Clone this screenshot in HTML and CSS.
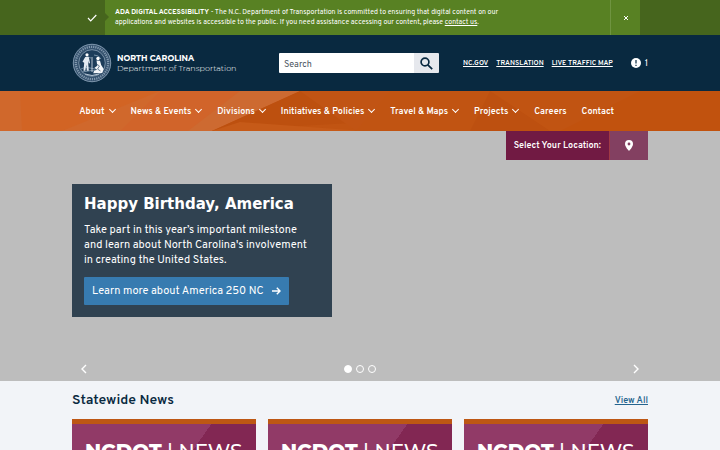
FILE: index.html
```html
<!DOCTYPE html>
<html lang="en">

<head>
  <meta charset="utf-8">
  <meta name="viewport" content="width=device-width, initial-scale=1">
  <title>NCDOT</title>
  <link rel="stylesheet" href="styles.css">
</head>

<body>

  <div class="alert">
    <div class="alert_icon">
      <svg width="10" height="8" viewBox="0 0 10 8"><path d="M1 4l2.7 2.8L9.3 1" /></svg>
    </div>
    <div class="alert_body">
      <p class="alert_text"><strong>ADA DIGITAL ACCESSIBILITY</strong> - The N.C. Department of Transportation is committed to ensuring that digital content on our applications and websites is accessible to the public. If you need assistance accessing our content, please <a href="#contact">contact us</a>.</p>
      <button class="alert_close" aria-label="Close">
        <svg width="6" height="6" viewBox="0 0 6 6"><path d="M1 1l4 4M5 1L1 5" /></svg>
      </button>
    </div>
  </div>

  <header class="header">
    <a class="logo" href="#home">
      <svg class="seal" width="40" height="40" viewBox="0 0 40 40">
        <circle cx="20" cy="20" r="19.2" fill="#36536f" />
        <circle cx="20" cy="20" r="18.7" fill="none" stroke="#8ca2b6" stroke-width=".8" />
        <circle cx="20" cy="20" r="16.2" fill="none" stroke="#8299ae" stroke-width="2.2" stroke-dasharray="1.2 1" />
        <circle cx="20" cy="20" r="13.3" fill="#1d3d5a" stroke="#8ca2b6" stroke-width=".8" />
        <path d="M9 26q4-3 9-1l5 1q4-2 8 0M10 29q9-3 20 0M13 16q3-3 6-1M22 12q5 0 7 4" fill="none" stroke="#7f98ae" stroke-width=".9" />
        <circle cx="15" cy="11.8" r="1.6" fill="#fff" />
        <path d="M13.2 14l3.5-.3 1.3 6-1 1-1-3 .8 10h-2l-.5-6-1 6h-1.8l.7-8-1.7-1z" fill="#e4ebf2" />
        <path d="M20 14v15" stroke="#c9d5e0" stroke-width=".9" />
        <circle cx="26" cy="15.5" r="1.7" fill="#fff" />
        <path d="M24.5 17.5l3.5.3 1.2 4.2 2.5 4-1.5 4-9 .3 1-2.6 2.8-1-2.5-2 2.8-2z" fill="#f2f5f8" />
        <path d="M24.5 21l3 2-2 3 3 2" fill="none" stroke="#48647e" stroke-width=".8" />
        <path d="M13 31q7 3 14 0" fill="none" stroke="#b6c5d3" stroke-width="1" />
      </svg>
      <span class="logo_text"><strong>NORTH CAROLINA</strong><span>Department of Transportation</span></span>
    </a>
    <form class="search">
      <input type="search" placeholder="Search" aria-label="Search">
      <button type="button" aria-label="Submit search">
        <svg width="13" height="13" viewBox="0 0 13 13"><circle cx="5" cy="5" r="3.9" /><path d="M7.8 7.8l4.4 4.4" /></svg>
      </button>
    </form>
    <div class="links">
      <a href="#ncgov">NC.GOV</a>
      <a href="#translation">TRANSLATION</a>
      <a href="#traffic">LIVE TRAFFIC MAP</a>
    </div>
    <button class="notices" aria-label="1 notice">
      <svg width="10" height="10" viewBox="0 0 10 10"><circle cx="5" cy="5" r="5" fill="#fff" /><path d="M5 2v3.6M5 6.8V8" stroke="#092940" stroke-width="1.2" /></svg>
      1
    </button>
  </header>

  <nav class="nav">
    <svg class="facets" viewBox="0 0 720 40" preserveAspectRatio="none">
      <path d="M0 0h300L210 40H0z" fill="#d0682c" />
      <path d="M20 0h140l-98 40H22z" fill="#d26424" />
      <path d="M160 0h140l-88 40h-92z" fill="#cd6a31" />
      <path d="M120 40l40-40 80 0-52 40z" fill="#d1642a" />
      <path d="M300 0l-88 40 140-8-20-32z" fill="#bd500f" />
      <path d="M240 31l124 9H212z" fill="#c65a18" />
      <path d="M300 0h90l-34 40z" fill="#c15414" />
      <path d="M490 0l60 40h-80z" fill="#bd5010" />
      <path d="M560 40l80-40h80v40z" fill="#c1520e" />
    </svg>
    <ul class="menu">
      <li><a class="more" href="#about">About</a></li>
      <li><a class="more" href="#news">News &amp; Events</a></li>
      <li><a class="more" href="#divisions">Divisions</a></li>
      <li><a class="more" href="#initiatives">Initiatives &amp; Policies</a></li>
      <li><a class="more" href="#travel">Travel &amp; Maps</a></li>
      <li><a class="more" href="#projects">Projects</a></li>
      <li><a href="#careers">Careers</a></li>
      <li><a href="#contact">Contact</a></li>
    </ul>
  </nav>

  <section class="hero">
    <div class="location">
      <span>Select Your Location:</span>
      <button aria-label="Choose location">
        <svg width="8" height="11" viewBox="0 0 8 11"><path fill="#fff" fill-rule="evenodd" d="M4 0a4 4 0 0 0-4 4c0 3 4 7 4 7s4-4 4-7a4 4 0 0 0-4-4zm0 2.6a1.4 1.4 0 1 1 0 2.8 1.4 1.4 0 0 1 0-2.8z" /></svg>
      </button>
    </div>

    <div class="slide">
      <h1>Happy Birthday, America</h1>
      <p>Take part in this year’s important milestone and learn about North Carolina's involvement in creating the United States.</p>
      <a class="slide_link" href="#america250">Learn more about America 250 NC
        <svg width="9" height="8" viewBox="0 0 9 8"><path d="M0 4h8M4.8 .8L8 4 4.8 7.2" /></svg>
      </a>
    </div>

    <div class="controls">
      <button aria-label="Previous"><svg width="6" height="10" viewBox="0 0 6 10"><path d="M5 1L1 5l4 4" /></svg></button>
      <div class="dots">
        <button class="dot active" aria-label="Slide 1"></button>
        <button class="dot" aria-label="Slide 2"></button>
        <button class="dot" aria-label="Slide 3"></button>
      </div>
      <button aria-label="Next"><svg width="6" height="10" viewBox="0 0 6 10"><path d="M1 1l4 4-4 4" /></svg></button>
    </div>
  </section>

  <section class="news">
    <div class="news_head">
      <h2>Statewide News</h2>
      <a href="#allnews">View All</a>
    </div>
    <div class="cards">
      <a class="card" href="#story1"><strong>NCDOT</strong> | NEWS</a>
      <a class="card" href="#story2"><strong>NCDOT</strong> | NEWS</a>
      <a class="card" href="#story3"><strong>NCDOT</strong> | NEWS</a>
    </div>
  </section>

</body>

</html>
```
FILE: styles.css
```css
* {
  box-sizing: border-box;
}

body {
  margin: 0;
  background: #f2f4f8;
  color: #092940;
  font-family: "Overpass", "Roboto", sans-serif;
}

button {
  border: 0;
  padding: 0;
  background: none;
  color: white;
  font-family: inherit;
}

svg {
  display: block;
}

.alert {
  display: flex;
  height: 35px;
  background: #46651d;
  color: white;
}

.alert_icon {
  display: flex;
  align-items: center;
  justify-content: flex-end;
  width: 105px;
  padding-right: 8px;
}

.alert_icon path,
.alert_close path {
  fill: none;
  stroke: white;
  stroke-width: 1.2;
}

.alert_close path {
  stroke-width: 1;
}

.alert_body {
  position: relative;
  display: flex;
  flex: 1;
  justify-content: space-between;
  margin-right: 80px;
  background: #588123;
}

.alert_body::before {
  content: "";
  position: absolute;
  left: 0;
  top: 13px;
  border: 4px solid transparent;
  border-left-color: #46651d;
}

.alert_text {
  align-self: center;
  width: 410px;
  margin: 0;
  padding: 1px 0 0 10px;
  font-size: 7px;
  line-height: 10px;
}

.alert_text a {
  color: white;
}

.alert_close {
  display: flex;
  align-items: center;
  justify-content: center;
  width: 30px;
  border-left: 1px solid #6f9440;
}

.header {
  display: flex;
  align-items: center;
  height: 56px;
  padding: 0 10%;
  background: #092940;
  color: white;
}

.header a {
  color: white;
}

.logo {
  display: flex;
  align-items: center;
  gap: 5px;
  width: 207px;
  text-decoration: none;
}

.logo_text {
  display: flex;
  flex-direction: column;
  font-family: "Montserrat", "Inter", sans-serif;
  font-size: 8px;
  line-height: 10px;
  white-space: nowrap;
}

.logo_text span {
  font-weight: 300;
}

.search {
  display: flex;
  width: 160px;
  height: 20px;
  border-radius: 1px;
  overflow: hidden;
}

.search input {
  flex: 1;
  min-width: 0;
  border: 0;
  padding: 3px 5px 0;
  background: white;
  font-family: inherit;
  font-size: 9px;
}

.search input::placeholder {
  color: #4a5560;
}

.search button {
  display: flex;
  align-items: center;
  justify-content: center;
  width: 25px;
  background: #e6e8ed;
}

.search svg {
  fill: none;
  stroke: #092940;
  stroke-width: 1.7;
}

.links {
  display: flex;
  gap: 8px;
  margin-left: 24px;
  font-size: 7px;
  font-weight: 600;
  white-space: nowrap;
}

.notices {
  display: flex;
  align-items: center;
  gap: 4px;
  margin-left: auto;
  font-size: 9px;
}

.nav {
  position: relative;
  height: 40px;
  padding: 0 11%;
  background: #c15412;
}

.facets {
  position: absolute;
  width: 100%;
  height: 100%;
  left: 0;
  top: 0;
}

.menu {
  position: relative;
  display: flex;
  align-items: center;
  gap: 15px;
  height: 100%;
  margin: 0;
  padding: 0;
  list-style: none;
  font-size: 9px;
  font-weight: 600;
  white-space: nowrap;
}

.menu a {
  color: white;
  text-decoration: none;
}

.more::after {
  content: "";
  display: inline-block;
  width: 4px;
  height: 4px;
  margin: 0 1px 2px 5px;
  border: solid white;
  border-width: 0 1px 1px 0;
  transform: rotate(45deg);
}

.hero {
  display: flex;
  flex-direction: column;
  height: 250px;
  padding: 0 10%;
  background: #bdbdbd;
}

.location {
  display: flex;
  align-self: flex-end;
  height: 29px;
  background: #711a43;
  color: white;
  font-size: 9px;
  font-weight: 600;
}

.location span {
  padding: 0 8px;
  line-height: 29px;
}

.location button {
  display: flex;
  align-items: center;
  justify-content: center;
  width: 39px;
  border-left: 1px solid #a03a45;
  background: #834061;
}

.slide {
  width: 260px;
  margin-top: 24px;
  padding: 12px;
  background: #304251;
  color: white;
}

.slide h1 {
  margin: 0;
  font-family: "DejaVu Sans", sans-serif;
  font-size: 15px;
  line-height: 17px;
}

.slide p {
  max-width: 232px;
  margin: 10px 0 9px;
  font-size: 11px;
  line-height: 15px;
}

.slide_link {
  display: inline-flex;
  align-items: center;
  gap: 8px;
  height: 28px;
  padding: 0 8px;
  border-radius: 1px;
  background: #377bb0;
  color: white;
  font-size: 11px;
  text-decoration: none;
  white-space: nowrap;
}

.slide_link path,
.controls path {
  fill: none;
  stroke: white;
  stroke-width: 1.4;
}

.controls {
  display: flex;
  align-items: center;
  justify-content: space-between;
  margin-top: auto;
  padding: 0 9px 7px;
}

.dots {
  display: flex;
  gap: 4px;
}

.dot {
  width: 8px;
  height: 8px;
  border: 1px solid white;
  border-radius: 50%;
}

.active {
  background: white;
}

.news {
  padding: 0 10%;
}

.news_head {
  display: flex;
  align-items: center;
  justify-content: space-between;
  height: 38px;
}

.news_head h2 {
  margin: 0;
  font-size: 14px;
  font-weight: 600;
}

.news_head a {
  color: #26648e;
  font-size: 9px;
  font-weight: 600;
}

.cards {
  display: grid;
  grid-template-columns: repeat(3, 1fr);
  gap: 12px;
}

.card {
  height: 104px;
  padding: 14px 0 0 13px;
  border-top: 5px solid #bd5714;
  background:
    linear-gradient(160deg, transparent 62%, #7a214d 62%),
    linear-gradient(50deg, #984069 22%, transparent 22%),
    linear-gradient(125deg, #913a67 55%, #822753 55%);
  color: white;
  font-family: "Montserrat", "Inter", sans-serif;
  font-size: 20px;
  font-weight: 500;
  line-height: 26px;
  text-decoration: none;
  white-space: nowrap;
}

.card strong {
  font-weight: 800;
}
```
